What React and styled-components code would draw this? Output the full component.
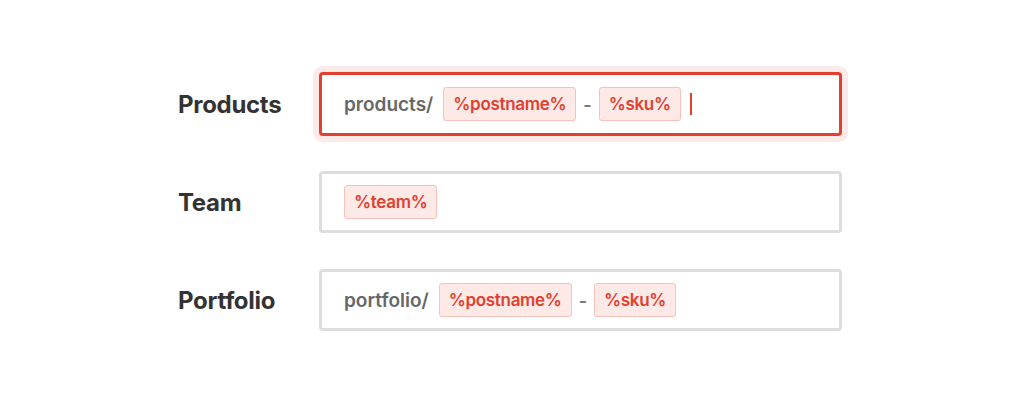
import React from "react";
import styled, { createGlobalStyle } from "styled-components";

const GlobalStyle = createGlobalStyle`
  html, body {
    margin: 0;
    padding: 0;
    background: #ffffff;
  }
  body {
    font-family: Inter, "Open Sans", Arial, sans-serif;
  }
`;

const fields = [
    { label: "Products", prefix: "products/", tags: ["%postname%", "%sku%"], active: true },
    { label: "Team", prefix: null, tags: ["%team%"] },
    { label: "Portfolio", prefix: "portfolio/", tags: ["%postname%", "%sku%"] },
];

export default function App() {
    return (
        <>
            <GlobalStyle />
            <Page>
                <Form>
                    {fields.map((field) => (
                        <Row key={field.label}>
                            <Label>{field.label}</Label>
                            <Field active={field.active}>
                                {field.prefix && <Prefix>{field.prefix}</Prefix>}
                                {field.tags.map((tag, i) => (
                                    <React.Fragment key={tag}>
                                        {i > 0 && <Dash>-</Dash>}
                                        <Tag>{tag}</Tag>
                                    </React.Fragment>
                                ))}
                                {field.active && <Caret />}
                            </Field>
                        </Row>
                    ))}
                </Form>
            </Page>
        </>
    );
}

const Page = styled.div`
    width: 1024px;
    height: 401px;
    box-sizing: border-box;
    padding: 73px 0 0 178px;
`;

const Form = styled.div`
    display: flex;
    flex-direction: column;
    gap: 36px;
`;

const Row = styled.div`
    display: grid;
    grid-template-columns: 141px 523px;
    align-items: center;
    height: 62px;
`;

const Label = styled.div`
    font-size: 24px;
    font-weight: 700;
    color: #333333;
    letter-spacing: -0.3px;
`;

const Field = styled.div`
    display: flex;
    align-items: center;
    gap: 8px;
    box-sizing: border-box;
    height: ${(p) => (p.active ? "64px" : "62px")};
    margin: ${(p) => (p.active ? "-1px 0" : "0")};
    padding: 0 22px;
    border: 3px solid ${(p) => (p.active ? "#e2402f" : "#dddddd")};
    border-radius: 4px;
    background: #ffffff;
    box-shadow: ${(p) => (p.active ? "0 0 0 6px #fdeae8" : "none")};
`;

const Prefix = styled.span`
    font-size: 19px;
    font-weight: 600;
    color: #676767;
    margin-right: 2px;
`;

const Dash = styled.span`
    margin: 0 -1px;
    font-size: 18px;
    font-weight: 600;
    color: #777777;
`;

const Tag = styled.span`
    display: inline-flex;
    align-items: center;
    height: 34px;
    box-sizing: border-box;
    padding: 0 9px;
    border: 1px solid #f6c2bb;
    border-radius: 3px;
    background: #fdeae7;
    color: #e2402f;
    font-size: 17px;
    font-weight: 600;
    letter-spacing: -0.3px;
`;

const Caret = styled.span`
    width: 2px;
    height: 22px;
    margin-left: 1px;
    background: #e2402f;
`;
